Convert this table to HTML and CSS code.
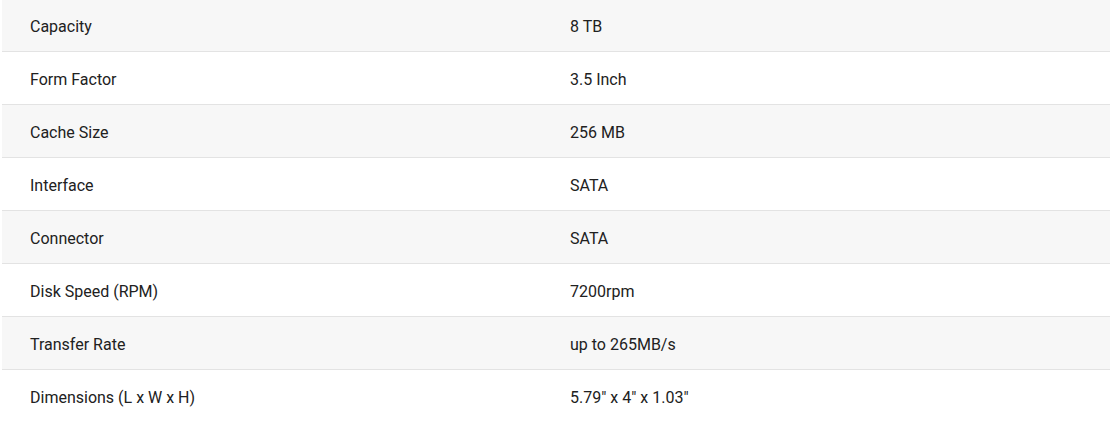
FILE: index.html
```html
<!DOCTYPE html>
<html lang="en">
<head>
<meta charset="utf-8">
<title>Specifications</title>
<link rel="stylesheet" href="styles.css">
</head>
<body>
<div class="specs">
  <div class="row alt"><div class="label">Capacity</div><div class="value">8 TB</div></div>
  <div class="row"><div class="label">Form Factor</div><div class="value">3.5 Inch</div></div>
  <div class="row alt"><div class="label">Cache Size</div><div class="value">256 MB</div></div>
  <div class="row"><div class="label">Interface</div><div class="value">SATA</div></div>
  <div class="row alt"><div class="label">Connector</div><div class="value">SATA</div></div>
  <div class="row"><div class="label">Disk Speed (RPM)</div><div class="value">7200rpm</div></div>
  <div class="row alt"><div class="label">Transfer Rate</div><div class="value">up to 265MB/s</div></div>
  <div class="row"><div class="label">Dimensions (L x W x H)</div><div class="value">5.79" x 4" x 1.03"</div></div>
</div>
</body>
</html>
```
FILE: styles.css
```css
html, body {
  margin: 0;
  padding: 0;
  background: #ffffff;
}
body {
  font-family: Roboto, "Liberation Sans", sans-serif;
  font-size: 16px;
  color: #212121;
  padding-left: 2px;
  overflow: hidden;
}
.specs {
  display: flex;
  flex-direction: column;
  margin-top: -1px;
}
.row {
  display: grid;
  grid-template-columns: 540px 1fr;
  border-bottom: 1px solid #e3e3e3;
}
.row.alt {
  background: #f7f7f7;
}
.label, .value {
  padding: 18px 0 14px 28px;
  line-height: 20px;
}
```
